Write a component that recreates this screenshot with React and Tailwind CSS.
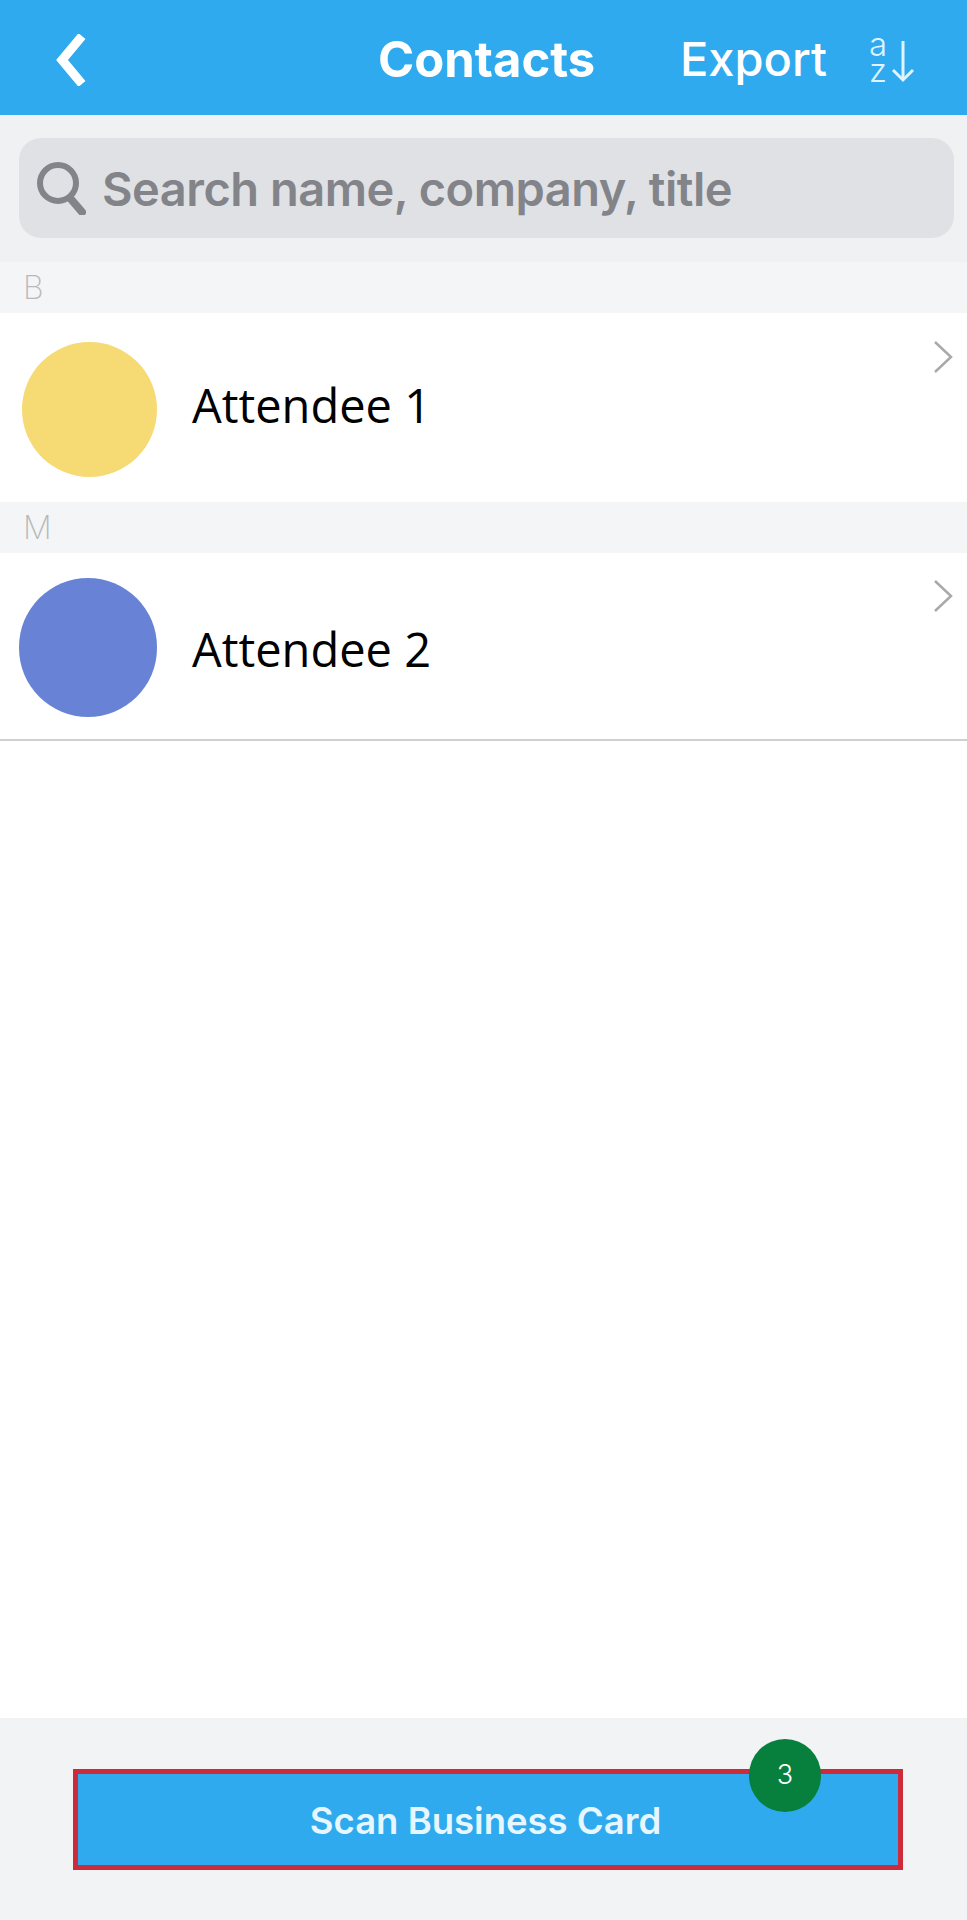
const contacts = [
  { letter: "B", name: "Attendee 1", color: "bg-[#f6da73]", size: "w-[135px] h-[135px] ml-[22px] mr-[35px]", row: "pt-[29px] h-[189px]", textTop: "mt-[33px]", chevTop: "-mt-[1px]" },
  { letter: "M", name: "Attendee 2", color: "bg-[#6883d6]", size: "w-[138px] h-[139px] ml-[19px] mr-[35px]", row: "pt-[25px] h-[187px]", textTop: "mt-[41px]", chevTop: "mt-[2px]" },
];

function BackIcon() {
  return (
    <svg width="36" height="52" viewBox="0 0 36 52" fill="none">
      <path d="M32 2 L12 26 L32 50" stroke="white" strokeWidth="9" strokeLinejoin="miter" />
    </svg>
  );
}

function SortIcon() {
  return (
    <div className="flex items-center gap-[4px] text-[#dff4ff]">
      <div className="text-center text-[33px] leading-[26px] font-light -mt-[1px]">
        a<br />z
      </div>
      <svg width="24" height="42" viewBox="0 0 24 42" fill="none" stroke="currentColor" strokeWidth="3" className="mt-[8px]">
        <path d="M12 0 V39" />
        <path d="M2 29 L12 39 L22 29" />
      </svg>
    </div>
  );
}

function SearchIcon() {
  return (
    <svg width="50" height="54" viewBox="0 0 50 54" fill="none" stroke="#838489">
      <circle cx="22" cy="22" r="18" strokeWidth="6" />
      <path d="M34 37 L46 51" strokeWidth="8" strokeLinecap="round" />
    </svg>
  );
}

function Chevron({ className }) {
  return (
    <svg width="20" height="32" viewBox="0 0 20 32" fill="none" stroke="#a9a9ac" strokeWidth="2.5" className={className}>
      <path d="M2 1 L18 16 L2 31" />
    </svg>
  );
}

export default function App() {
  return (
    <div className="w-[967px] h-[1920px] flex flex-col bg-white font-['Inter',sans-serif]">
      <div className="h-[115px] bg-[#2faaef] flex items-center text-white">
        <div className="ml-[50px] w-[328px] mt-[4px]">
          <BackIcon />
        </div>
        <div className="text-[49px] font-bold w-[302px] mt-[4px]">Contacts</div>
        <div className="text-[47px] font-medium w-[189px] mt-[4px]">Export</div>
        <SortIcon />
      </div>

      <div className="h-[147px] bg-[#f0f1f3] pl-[19px] pr-[13px] pt-[23px]">
        <div className="h-[100px] rounded-[22px] bg-[#e0e1e5] flex items-center pl-[17px]">
          <SearchIcon />
          <span className="ml-[16px] mt-[2px] text-[47px] font-semibold text-[#838489] tracking-[-0.5px]">Search name, company, title</span>
        </div>
      </div>

      {contacts.map((c) => (
        <div key={c.letter}>
          <div className="h-[51px] bg-[#f4f5f7] pl-[23px] pt-[7px] text-[32px] leading-[38px] font-extralight text-[#b8b9bd]">
            {c.letter}
          </div>
          <div className={"flex items-start bg-white " + c.row}>
            <div className={"rounded-full shrink-0 " + c.color + " " + c.size} />
            <span className={"text-[47px] leading-[60px] text-black font-['Open_Sans',sans-serif] " + c.textTop}>{c.name}</span>
            <Chevron className={"ml-auto mr-[14px] " + c.chevTop} />
          </div>
        </div>
      ))}
      <div className="h-[2px] -mt-[1px] bg-[#cfcfd2]" />

      <div className="flex-1 bg-white" />

      <div className="h-[202px] bg-[#f2f3f5] pl-[73px] pr-[64px] pt-[51px]">
        <div className="relative h-[101px] border-[5px] border-[#cd2a3c] bg-[#2faaef] flex items-center justify-center">
          <span className="text-[36.5px] font-semibold text-[#e6f7ff] mt-[3px] mr-[5px]">Scan Business Card</span>
          <div className="absolute left-[671px] -top-[35px] w-[72px] h-[73px] rounded-full bg-[#06803c] flex items-center justify-center text-[27px] text-white font-light">
            3
          </div>
        </div>
      </div>
    </div>
  );
}
